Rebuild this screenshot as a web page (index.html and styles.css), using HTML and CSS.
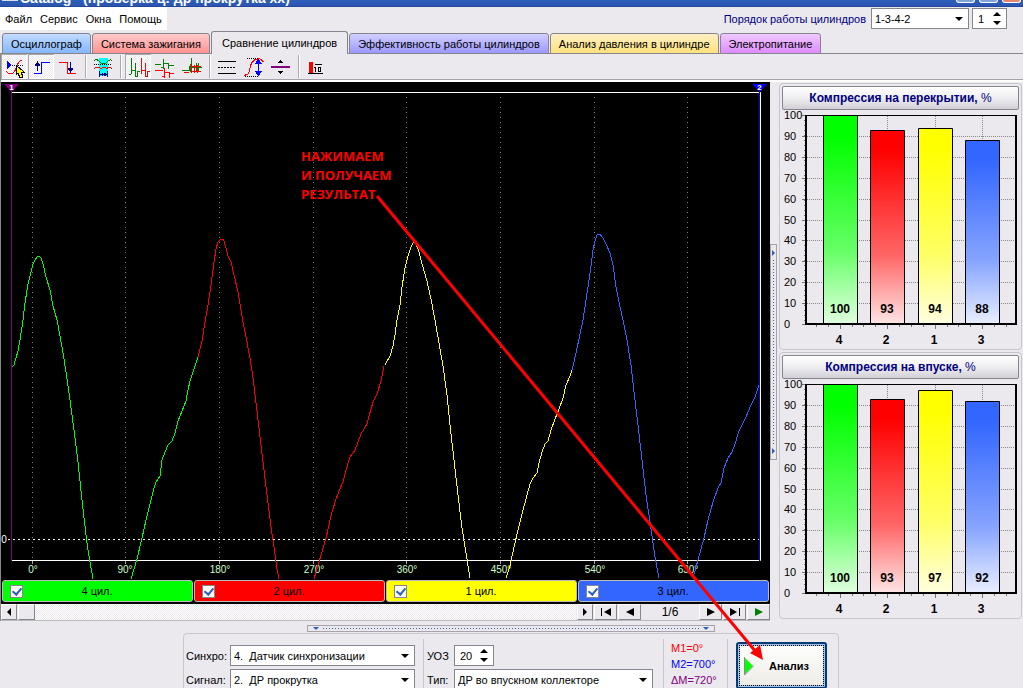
FILE: index.html
```html
<!DOCTYPE html>
<html lang="ru">
<head>
<meta charset="utf-8">
<title>Сравнение цилиндров</title>
<link rel="stylesheet" href="styles.css">
</head>
<body>
<header class="titlebar">
  <span class="app-icon"></span>
  <span class="title-text">Catalog&nbsp;&nbsp; (проверка ц: др прокрутка хх)</span>
  <span class="win-buttons"><i></i><i></i><i class="close"></i></span>
</header>

<div class="menubar">
  <nav class="menu"><a href="#">Файл</a><a href="#">Сервис</a><a href="#">Окна</a><a href="#">Помощь</a></nav>
  <div class="order">
    <label for="order">Порядок работы цилиндров</label>
    <span class="combo order-combo"><select id="order"><option>1-3-4-2</option></select></span>
    <span class="spin order-spin"><input type="number" value="1" aria-label="Цилиндр"><i></i></span>
  </div>
</div>

<nav class="tabs">
  <button class="tab blue">Осциллограф</button>
  <button class="tab red">Система зажигания</button>
  <button class="tab active">Сравнение цилиндров</button>
  <button class="tab violet">Эффективность работы цилиндров</button>
  <button class="tab yellow">Анализ давления в цилиндре</button>
  <button class="tab pink">Электропитание</button>
</nav>

<div class="toolbar">
  <button class="tool pressed" aria-label="Курсор"><svg viewBox="1 54 26 25"><path d="M7 61v8l5-4z" fill="#00f"/><path d="M12 65.500h11" stroke="#000080" stroke-dasharray="1 1"/><path d="M6 71q3 4 7 2q3-3 4-7q2-6 5-6" stroke="red"/><path d="M16 65v10l2-2 2 5 3-1-2-5h3z" fill="#ff0" stroke="#000"/></svg></button>
  <button class="tool pressed" aria-label="Фронт"><svg viewBox="28 54 26 25"><path d="M34 73.500h7.500V62.500h8.500" stroke="#00f"/><path d="M37.500 71v-8" stroke="#000080"/><path d="M37.500 61l3 5h-6z" fill="#000080"/></svg></button>
  <button class="tool" aria-label="Спад"><svg viewBox="55 54 26 25"><path d="M59 62.500h8.500v11h8.500" stroke="red"/><path d="M70.500 62v8" stroke="#000080"/><path d="M70.500 73l3-5h-6z" fill="#000080"/></svg></button>
  <i class="sep"></i>
  <button class="tool" aria-label="Фазы"><svg viewBox="90 54 26 25"><path d="M99 58h9v18h-9z" fill="#0ff"/><path d="M94 61q3-3 6 1t7 0t5-1" stroke="green"/><path d="M94 64.500h18" stroke="#000" stroke-dasharray="1 1"/><path d="M94 69q3-4 7 0q3-3 6 0q2-4 5 0" stroke="red"/><path d="M99.500 71v6M107.500 71v6M100 74.500h7" stroke="#000080"/><path d="M100 74.500l3-2v4zM107 74.500l-3-2v4z" fill="#000080"/></svg></button>
  <i class="sep"></i>
  <button class="tool pressed" aria-label="Раздельно"><svg viewBox="125 54 26 25"><path d="M131.500 58v16M129 74.500h2M131 70.500h4.500v-7M135.500 63v14M136 76.500h1.500v-5h2" stroke="green"/><path d="M141.500 58v16M141 70.500h4.500v-7M145.500 63v14M146 76.500h1.500v-5h2" stroke="red"/></svg></button>
  <button class="tool" aria-label="Друг под другом"><svg viewBox="152 54 26 25"><path d="M155 64.500h6M163.500 59v10M161 67.500h2M164 63.500h4.500v5M168 65.500h6" stroke="green"/><path d="M155 70.500h7.500M164.500 68v10M162 76.500h2M165 72.500h4.500v5M169 73.500h5" stroke="red"/></svg></button>
  <button class="tool" aria-label="Наложение"><svg viewBox="179 54 26 25"><path d="M182 70.500h7.500v-5M191.500 58v15M192 67.500h10M196.500 63v8M198.500 63v8" stroke="green"/><path d="M184 72.500h5M190.500 64v8M192 71.500h9M194.500 65v8M197.500 65v8M192 66.500h9" stroke="red"/></svg></button>
  <i class="sep"></i>
  <button class="tool" aria-label="Линии"><svg viewBox="214 54 26 25"><path d="M218 61.500h18M218 73.500h18" stroke="#000"/><path d="M218 67.500h18" stroke="#000" stroke-dasharray="2 1"/></svg></button>
  <button class="tool" aria-label="Размах"><svg viewBox="241 54 26 25"><path d="M247 58.500h14M245 76.500h14" stroke="#000" stroke-dasharray="1 1"/><path d="M244 75q5 1 6-7q2-10 10-9l4 3" stroke="red"/><path d="M258.500 61v13" stroke="#00f"/><path d="M258.500 59l4 5h-8zM258.500 76l4-5h-8z" fill="#00f"/></svg></button>
  <button class="tool" aria-label="Сдвиг"><svg viewBox="268 54 26 25"><path d="M271 67h19" stroke="purple" stroke-width="2"/><path d="M280.500 60l3 3h-6zM280.500 74l3-3h-6z" fill="#000"/></svg></button>
  <i class="sep"></i>
  <button class="tool" aria-label="Столбцы"><svg viewBox="303 54 26 25"><path d="M309 62h4v11h-4z" fill="red"/><path d="M308 73.500h15M315 64.500h7" stroke="#000"/><path d="M315.500 67v5M314 67.500h1M318.500 67.500h2v4h-2z" stroke="#000"/></svg></button>
</div>

<main class="main">
  <section class="scope">
    <svg class="wave" viewBox="1 82 769 498">
      <g stroke="#808080" stroke-dasharray="1 4"><path d="M32.500 97v463M125.500 97v463M219.500 97v463M313.500 97v463M406.500 97v463M500.500 97v463M594.500 97v463M687.500 97v463"/></g>
      <path d="M8 539.500h752" stroke="#fff" stroke-dasharray="2 3"/>
      <path d="M12 92.500h748.500v468H12" stroke="#fff"/>
      <path d="M32.500 561v3M125.500 561v3M219.500 561v3M313.500 561v3M406.500 561v3M500.500 561v3M594.500 561v3M687.500 561v3" stroke="#aaa"/>
      <path d="M11.500 90v471" stroke="purple"/><path d="M4 84h15l-7.500 8z" fill="purple"/>
      <path d="M759.500 90v471" stroke="#00f"/><path d="M752 84h15l-7.500 8z" fill="#00f"/>
      <text class="mark" x="11.500" y="90">1</text><text class="mark" x="759.500" y="90">2</text>
      <g class="deg"><text x="33" y="573">0°</text><text x="125" y="573">90°</text><text x="220" y="573">180°</text><text x="314" y="573">270°</text><text x="407" y="573">360°</text><text x="501" y="573">450°</text><text x="595" y="573">540°</text><text x="688" y="573">630°</text></g>
      <text class="zero" x="4" y="543">0</text>
      <g shape-rendering="crispEdges">
      <path stroke="#0f0" d="M12 367L14 365 18 351 20 340 23 320 25 303 28 284 31 272 33 264 35 260 37 257 39 256 41 258 43 264 46 277 50 290 53 306 57 320 60 336 63 353 66 372 70 400 74 430 78 462 82 500 86 535 88 550 90 562 93 579M131 579L134 569 137 559 142 538 146 520 150 504 154 488 156 482 160 476 162 460 165 452 168 445 172 441 175 433 178 421 182 411 186 401 188 390 190 381 195 366 198 357"/>
      <path stroke="red" d="M198 357L202 341 205 322 208 305 211 285 214 262 216 249 218 242 220 240 223 239 224 241 226 248 228 256 231 262 234 275 238 292 241 310 243 322 246 337 250 358 253 378 256 403 259 428 263 462 267 495 271 527 274 547 277 569 279 579M314 579L319 562 326 538 331 516 335 502 339 491 343 482 346 470 350 457 355 450 358 442 361 434 367 424 369 416 373 402 377 394 381 381 384 366"/>
      <path stroke="#ff0" d="M385 365L390 356 393 346 395 335 397 320 400 305 402 287 405 268 408 256 411 247 414 241 416 244 419 252 422 264 427 281 431 299 435 320 439 343 443 366 447 395 450 425 454 460 458 495 462 528 466 553 470 578M506 578L510 566 514 547 518 530 522 514 526 499 530 484 533 478 537 473 539 463 542 452 545 444 548 441 551 430 555 419 559 409 563 398 566 385 570 376 572 370"/>
      <path stroke="#36f" d="M572 370L574 362 577 348 579 339 583 320 586 300 588 287 591 266 593 250 595 241 597 235 600 234 603 238 606 244 610 253 613 265 616 287 620 307 623 320 627 340 631 365 634 392 638 425 642 460 646 495 650 522 655 557 659 578M693 578L698 560 704 538 708 520 713 502 718 488 721 483 724 468 728 458 732 452 735 444 739 431 746 417 751 405 755 397 759 385"/>
      </g>
    </svg>
    <div class="channels">
      <label class="ch green"><input type="checkbox" checked><span>4 цил.</span></label>
      <label class="ch red"><input type="checkbox" checked><span>2 цил.</span></label>
      <label class="ch yellow"><input type="checkbox" checked><span>1 цил.</span></label>
      <label class="ch blue"><input type="checkbox" checked><span>3 цил.</span></label>
    </div>
    <div class="pager">
      <button class="pg small" aria-label="Влево"><svg viewBox="0 0 10 10"><path d="M7 1v8L3 5z"/></svg></button>
      <div class="track"><i class="thumb"></i></div>
      <button class="pg small" aria-label="Вправо"><svg viewBox="0 0 10 10"><path d="M3 1v8l4-4z"/></svg></button>
      <button class="pg" aria-label="Первый"><svg viewBox="0 0 10 10"><path d="M0 1h1v8H0zM10 1v8L3 5z"/></svg></button>
      <button class="pg" aria-label="Назад"><svg viewBox="0 0 10 10"><path d="M9 1v8L1 5z"/></svg></button>
      <span class="page">1/6</span>
      <button class="pg" aria-label="Вперёд"><svg viewBox="0 0 10 10"><path d="M1 1v8l8-4z"/></svg></button>
      <button class="pg" aria-label="Последний"><svg viewBox="0 0 10 10"><path d="M9 1h1v8H9zM0 1v8l7-4z"/></svg></button>
      <button class="pg play" aria-label="Пуск"><svg viewBox="0 0 10 10"><path d="M1 1v8l8-4z"/></svg></button>
    </div>
  </section>

  <div class="vsplit"><div class="grip"><i></i><b></b><i></i></div></div>

  <aside class="side">
    <section class="panel">
      <h2>Компрессия на перекрытии, <span>%</span></h2>
      <svg class="bars" viewBox="0 0 237 237">
        <defs>
          <linearGradient id="g4" x2="0" y2="1"><stop stop-color="#0f0"/><stop offset=".1" stop-color="#0f0"/><stop offset=".65" stop-color="#6f6"/><stop offset="1" stop-color="#dfffdf"/></linearGradient>
          <linearGradient id="g2" x2="0" y2="1"><stop stop-color="red"/><stop offset=".1" stop-color="red"/><stop offset=".65" stop-color="#f66"/><stop offset="1" stop-color="#ffe4e4"/></linearGradient>
          <linearGradient id="g1" x2="0" y2="1"><stop stop-color="#ff0"/><stop offset=".1" stop-color="#ff0"/><stop offset=".65" stop-color="#ff6"/><stop offset="1" stop-color="#ffffe0"/></linearGradient>
          <linearGradient id="g3" x2="0" y2="1"><stop stop-color="#36f"/><stop offset=".1" stop-color="#36f"/><stop offset=".65" stop-color="#85a3ff"/><stop offset="1" stop-color="#e8eeff"/></linearGradient>
          <g id="axes">
            <path d="M25 26.500h209M25 47.500h209M25 68.500h209M25 89.500h209M25 110.500h209M25 130.500h209M25 151.500h209M25 172.500h209M25 193.500h209M58.500 6v208M105.500 6v208M153.500 6v208M200.500 6v208" stroke="#888" stroke-dasharray="1 1"/>
            <path d="M20 5.500h4M20 26.500h4M20 47.500h4M20 68.500h4M20 89.500h4M20 110.500h4M20 130.500h4M20 151.500h4M20 172.500h4M20 193.500h4M20 214.500h4M58.500 215v4M105.500 215v4M153.500 215v4M200.500 215v4M34.500 215v2M46.500 215v2M70.500 215v2M81.500 215v2M93.500 215v2M117.500 215v2M129.500 215v2M141.500 215v2M165.500 215v2M176.500 215v2M188.500 215v2M212.500 215v2M224.500 215v2" stroke="#777"/>
            <path d="M22.500 10v204" stroke="#777" stroke-dasharray="1 4"/>
            <path d="M24 5.500h210" stroke="#000"/><path d="M24 5v210M23 214h212M234 5v210" stroke="#000" stroke-width="2"/>
            <g class="scale"><text x="2" y="9">100</text><text x="2" y="30">90</text><text x="2" y="51">80</text><text x="2" y="72">70</text><text x="2" y="93">60</text><text x="2" y="114">50</text><text x="2" y="134">40</text><text x="2" y="155">30</text><text x="2" y="176">20</text><text x="2" y="197">10</text><text x="2" y="218">0</text></g>
            <g class="num"><text x="57" y="234">4</text><text x="104" y="234">2</text><text x="152" y="234">1</text><text x="199" y="234">3</text></g>
          </g>
        </defs>
        <use href="#axes"/>
        <g stroke="#000"><path d="M41.500 5.500h34v208h-34z" fill="url(#g4)"/><path d="M88.500 20.500h34v193h-34z" fill="url(#g2)"/><path d="M136.500 18.500h34v195h-34z" fill="url(#g1)"/><path d="M183.500 30.500h34v183h-34z" fill="url(#g3)"/></g>
        <g class="num"><text x="58" y="203">100</text><text x="105" y="203">93</text><text x="153" y="203">94</text><text x="200" y="203">88</text></g>
      </svg>
    </section>
    <section class="panel">
      <h2>Компрессия на впуске, <span>%</span></h2>
      <svg class="bars" viewBox="0 0 237 237">
        <use href="#axes"/>
        <g stroke="#000"><path d="M41.500 5.500h34v208h-34z" fill="url(#g4)"/><path d="M88.500 20.500h34v193h-34z" fill="url(#g2)"/><path d="M136.500 11.500h34v202h-34z" fill="url(#g1)"/><path d="M183.500 22.500h34v191h-34z" fill="url(#g3)"/></g>
        <g class="num"><text x="58" y="203">100</text><text x="105" y="203">93</text><text x="153" y="203">97</text><text x="200" y="203">92</text></g>
      </svg>
    </section>
  </aside>
</main>

<footer class="bottom">
  <div class="hgrip"><i></i><b></b><i></i></div>
  <div class="controls">
    <div class="grid source">
      <label for="sync">Синхро:</label><span class="combo"><select id="sync"><option>4.&nbsp; Датчик синхронизации</option></select></span>
      <label for="signal">Сигнал:</label><span class="combo"><select id="signal"><option>2.&nbsp; ДР прокрутка</option></select></span>
    </div>
    <div class="grid kind">
      <label for="uoz">УОЗ</label><span class="spin"><input id="uoz" type="number" value="20"><i></i></span>
      <label for="type">Тип:</label><span class="combo"><select id="type"><option>ДР во впускном коллекторе</option></select></span>
    </div>
    <div class="marks"><span class="m1">M1=0°</span><span class="m2">M2=700°</span><span class="dm">ΔM=720°</span></div>
    <div class="run"><button class="analyze"><svg viewBox="0 0 10 18"><path d="M0 0v18l9-9z" fill="#0f0"/><path d="M.5 0v18l9-9" stroke="#888" fill="none"/></svg>Анализ</button></div>
  </div>
</footer>

<svg class="callout" viewBox="0 0 1023 688">
  <text x="301" y="161">НАЖИМАЕМ</text><text x="301" y="180">И ПОЛУЧАЕМ</text><text x="301" y="199">РЕЗУЛЬТАТ</text>
  <path d="M377 196L756 652" stroke="red" stroke-width="3"/><path d="M763 660l-13-7 10-8z" fill="red"/>
</svg>
</body>
</html>
```
FILE: styles.css
```css
* { box-sizing: border-box; }
html { height: 100%; }
body {
  position: relative;
  margin: 0;
  height: 100%;
  overflow: hidden;
  display: flex;
  flex-direction: column;
  background: #ebe9ed;
  color: #000;
  font: 11px/14px "Liberation Sans", Arial, sans-serif;
}
button, input, select { font: inherit; color: inherit; margin: 0; }
svg { display: block; fill: none; }

.titlebar {
  flex: none;
  display: flex;
  align-items: flex-end;
  height: 7px;
  padding: 0 2px;
  overflow: hidden;
  background: linear-gradient(#2d5fba, #2b55b0 80%, #1e3f8c);
  color: #fff;
  font-size: 14px;
  font-weight: bold;
}
.app-icon { align-self: flex-start; width: 16px; height: 1px; background: #d8dce8; }
.title-text { flex: 1; margin-left: 2px; white-space: nowrap; line-height: 18px; }
.win-buttons { align-self: flex-start; display: flex; gap: 4px; }
.win-buttons i { width: 19px; height: 3px; border: solid #fff; border-width: 0 1px 1px; border-radius: 0 0 3px 3px; background: #7fa3dc; }
.win-buttons .close { background: #e4866f; }

.menubar { flex: none; display: flex; justify-content: space-between; height: 24px; }
.menu { display: flex; gap: 8px; height: 23px; padding: 5px 5px 0 5px; background: #fff; }
.menu a { color: #000; text-decoration: none; }
.order { display: flex; align-items: flex-start; gap: 3px; padding: 1px 16px 0 0; color: #000080; }
.order label { padding: 4px 2px 0 0; }
.order-combo { width: 98px; }
.order-spin { width: 35px; }

.combo, .spin { position: relative; display: block; height: 21px; border: 1px solid #85858f; background: #fff; color: #000; }
.combo select { appearance: none; width: 100%; height: 19px; padding: 0 20px 0 3px; border: 0; background: none; }
.combo::after { content: ""; position: absolute; right: 5px; top: 8px; border: solid transparent; border-width: 4px 4px 0; border-top-color: #000; pointer-events: none; }
.spin input { appearance: textfield; width: 100%; height: 19px; padding: 0 0 0 5px; border: 0; background: none; }
.spin input::-webkit-inner-spin-button { appearance: none; margin: 0; }
.spin i { position: absolute; right: 5px; top: 3px; width: 8px; height: 13px; pointer-events: none; }
.spin i::before, .spin i::after { content: ""; position: absolute; left: 0; border: 4px solid transparent; }
.spin i::before { top: 0; border-top-width: 0; border-bottom-color: #000; }
.spin i::after { bottom: 0; border-bottom-width: 0; border-top-color: #000; }

.tabs { flex: none; display: flex; align-items: flex-end; gap: 1px; height: 23px; padding: 0 2px; box-shadow: inset 0 -1px #85858f; }
.tab { height: 21px; padding: 0 8px; border: 1px solid #85858f; border-radius: 3px 3px 0 0; white-space: nowrap; }
.tab.blue { background: linear-gradient(#c2dcff, #84b6ff); }
.tab.red { background: linear-gradient(#ffcaca, #ff9292); }
.tab.violet { background: linear-gradient(#d2d0ff, #9c98ff); }
.tab.yellow { background: linear-gradient(#fff0c4, #ffe17c); }
.tab.pink { background: linear-gradient(#efc8ff, #de8cff); }
.tab.active { height: 23px; padding: 0 10px; border-bottom: 0; background: #ebe9ed; }

.toolbar { flex: none; display: flex; gap: 1px; height: 28px; border-left: 1px solid #888; box-shadow: inset 0 -2px #fff, inset 0 -3px #a5a3aa; }
.tool { width: 26px; height: 25px; padding: 0; border: 0; background: none; }
.tool svg { width: 26px; height: 25px; shape-rendering: crispEdges; }
.tool.pressed { background: repeating-conic-gradient(#fff 0 25%, #ebe9ed 0 50%) 0 0 / 2px 2px; box-shadow: inset 1px 1px #aaa, inset -1px -1px #fff; }
.sep { width: 2px; height: 23px; margin: 1px 2px 0 3px; border-left: 1px solid #aaa; background: #fff; }

.main { flex: none; display: flex; }
.scope { flex: 1; min-width: 0; border-left: 1px solid #888; }
.wave { width: 100%; background: #000; }
.wave text { fill: #ccffcc; text-anchor: middle; font-size: 10px; }
.wave .mark { fill: #fff; font-size: 8px; font-weight: bold; }
.wave .zero { fill: #fff; }
.channels { display: flex; gap: 1px; padding: 0 1px 2px; background: #000; }
.ch { flex: 1; display: flex; align-items: center; height: 22px; padding: 0 7px; border: 1px solid #bbb; border-radius: 3px; }
.ch span { flex: 1; text-align: center; padding-right: 14px; }
.ch.green { background: #0f0; }
.ch.red { background: #f00; }
.ch.yellow { background: #ff0; }
.ch.blue { background: #36f; }
.ch input { appearance: none; width: 13px; height: 13px; border: 1px solid #85858f; background: #fff; }
.ch input:checked::after { content: ""; display: block; width: 4px; height: 7px; margin: 0 0 0 3px; border: solid #2d5fba; border-width: 0 2px 2px 0; transform: rotate(40deg); }
.pager { display: flex; gap: 1px; height: 17px; border-bottom: 1px solid #bbb; }
.pg { display: flex; align-items: center; justify-content: center; width: 23px; height: 16px; padding: 0; border: 1px solid; border-color: #fff #85858f #85858f #fff; background: #ebe9ed; }
.pg svg { width: 10px; height: 10px; fill: #000; }
.pg.small { width: 16px; }
.pg.play svg { fill: green; }
.page { width: 56px; text-align: center; font-size: 12px; line-height: 17px; }
.track { flex: 1; background: repeating-conic-gradient(#fff 0 25%, #ebe9ed 0 50%) 0 0 / 2px 2px; }
.thumb { display: block; width: 17px; height: 16px; border: 1px solid; border-color: #fff #85858f #85858f #fff; background: #ebe9ed; }

.vsplit { width: 7px; display: flex; align-items: center; }
.grip { display: flex; flex-direction: column; justify-content: space-between; width: 7px; height: 216px; padding: 5px 0; border: 1px solid #a5a3aa; }
.grip i { border: 3px solid transparent; border-left-color: #2d5fba; border-right: 0; margin-left: 1px; }
.grip b { flex: 1; width: 1px; margin: 4px 2px; background: repeating-linear-gradient(#2d5fba 0 1px, transparent 1px 3px); }

.side { width: 246px; display: flex; flex-direction: column; gap: 2px; padding: 1px 1px 0 2px; }
.panel { padding: 2px; border: 1px solid #c8c6cc; border-radius: 4px; }
.panel h2 { margin: 0; height: 24px; border: 1px solid #85858f; border-radius: 2px; background: linear-gradient(#fff, #eeedf0 50%, #d2d0d6); color: #000080; text-align: center; font-size: 12px; line-height: 22px; }
.panel h2 span { font-weight: normal; }
.bars { width: 100%; }
.scale text { fill: #000; font-size: 11px; }
.num text { fill: #000; font-size: 12px; font-weight: bold; text-anchor: middle; }

.bottom { flex: none; display: flex; flex-direction: column; padding: 4px 184px 0 183px; }
.hgrip { align-self: center; display: flex; justify-content: space-between; align-items: center; width: 408px; height: 7px; padding: 0 5px; border: 1px solid #a5a3aa; }
.hgrip i { border: 3px solid transparent; border-top-color: #2d5fba; border-bottom: 0; }
.hgrip b { flex: 1; height: 1px; margin: 0 4px; background: repeating-linear-gradient(90deg, #2d5fba 0 1px, transparent 1px 3px); }
.controls { display: flex; margin-top: 1px; height: 64px; border: 1px solid #c8c6cc; border-radius: 4px 4px 0 0; }
.grid { display: grid; align-content: start; align-items: center; gap: 3px 2px; padding-top: 11px; }
.source { grid-template-columns: 42px 185px; padding-left: 2px; width: 239px; }
.kind { grid-template-columns: 25px 199px; padding-left: 3px; margin-top: 5px; padding-top: 6px; border-left: 1px solid #c8c6cc; width: 240px; }
.kind .spin { width: 40px; }
.marks { display: flex; flex-direction: column; gap: 2px; width: 64px; margin-top: 5px; padding: 2px 0 0 7px; border-left: 1px solid #c8c6cc; }
.m1 { color: #f00; }
.m2 { color: #00f; }
.dm { color: #800080; }
.run { flex: 1; margin-top: 5px; padding: 3px 0 0 8px; border-left: 1px solid #c8c6cc; }
.analyze { display: flex; align-items: center; gap: 15px; width: 91px; height: 47px; padding: 0 6px; border: 2px solid #003c74; border-radius: 3px; outline: 1px dotted #000; outline-offset: -4px; background: linear-gradient(#fff, #ecebe4); box-shadow: inset 0 0 0 2px #a9c3ee; font-weight: bold; }
.analyze svg { width: 10px; height: 18px; }

.callout { position: absolute; left: 0; top: 0; width: 100%; pointer-events: none; }
.callout text { fill: #f00; font: bold 13px "Open Sans", sans-serif; }
```
